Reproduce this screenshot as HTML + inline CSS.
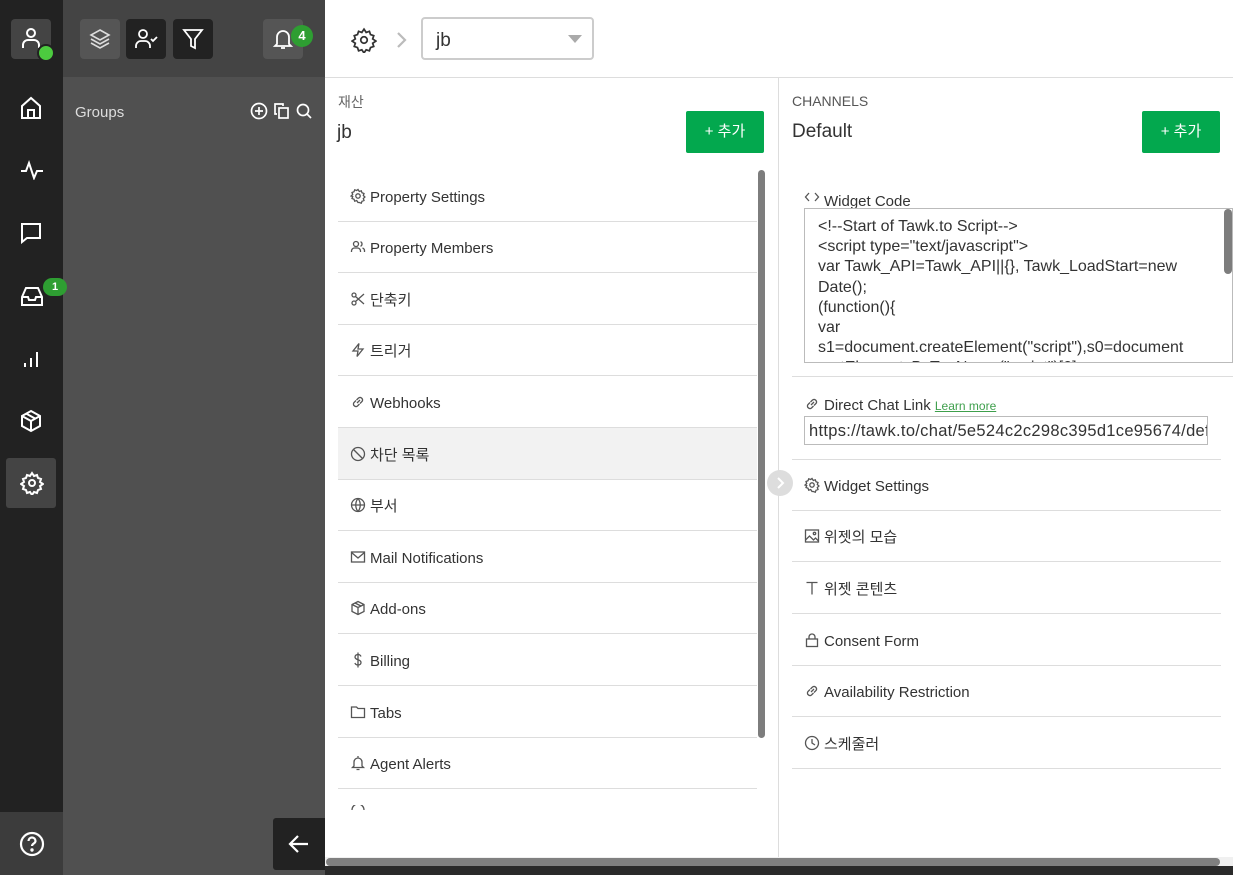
<!DOCTYPE html>
<html><head><meta charset="utf-8"><style>
*{box-sizing:border-box;margin:0;padding:0}
body{width:1233px;height:875px;overflow:hidden;position:relative;background:#fff;font-family:"Liberation Sans","Noto Sans CJK KR",sans-serif;color:#333}
.a{position:absolute}
.nav svg{position:absolute;left:20px}
.row{position:absolute;left:338px;width:419px;height:52px;border-bottom:1px solid #ddd;font-size:15px;line-height:56px;padding-left:12px;color:#333}
.rrow{position:absolute;left:792px;width:429px;height:52px;border-bottom:1px solid #ddd;font-size:15px;line-height:56px;padding-left:12px;color:#333}
.ic{display:inline-block;width:16px;height:16px;vertical-align:-2px;margin-right:4px;fill:none;stroke:#555;stroke-width:1.3}
.btn{position:absolute;background:#03a84e;color:#fff;font-size:15px;text-align:center;border-radius:2px;line-height:40px}
</style></head><body>
<div class="a" style="left:0;top:0;width:63px;height:875px;background:#222"></div>
<div class="a" style="left:0;top:812px;width:63px;height:63px;background:#3c3c3c"></div>
<div class="a" style="left:63px;top:0;width:262px;height:77px;background:#444"></div>
<div class="a" style="left:63px;top:77px;width:262px;height:798px;background:#505050"></div>
<div class="a" style="left:325px;top:866px;width:908px;height:9px;background:#2a2a2a"></div>
<div class="nav">
<div class="a" style="left:11px;top:19px;width:40px;height:40px;background:#444;border-radius:4px"></div>
<svg class="a" style="left:21px;top:27px" width="20" height="22" viewBox="0 0 20 22" fill="none" stroke="#fff" stroke-width="2"><circle cx="10" cy="6" r="4"/><path d="M2 21v-3a5 5 0 015-5h6a5 5 0 015 5v3"/></svg>
<div class="a" style="left:37px;top:44px;width:18px;height:18px;border-radius:50%;background:#4ccb3f;border:2px solid #222"></div>
<svg style="top:96px" width="22" height="24" viewBox="0 0 22 24" fill="none" stroke="#fff" stroke-width="2"><path d="M2 10L11 2l9 8v12H2z"/><path d="M8 22v-8h6v8"/></svg>
<svg style="top:160px" width="24" height="20" viewBox="0 0 24 20" fill="none" stroke="#fff" stroke-width="2"><path d="M1 11h5l3-8 5 15 3-7h6"/></svg>
<svg style="top:222px" width="22" height="22" viewBox="0 0 22 22" fill="none" stroke="#fff" stroke-width="2"><path d="M2 2h18v14H7l-5 4z"/></svg>
<svg style="top:285px" width="24" height="22" viewBox="0 0 24 22" fill="none" stroke="#fff" stroke-width="2"><path d="M2 12l4-9h12l4 9v8H2z"/><path d="M2 12h6l1 3h6l1-3h6"/></svg>
<div class="a" style="left:43px;top:278px;width:24px;height:18px;border-radius:9px;background:#2e9e32;color:#fff;font-size:11px;font-weight:bold;text-align:center;line-height:18px">1</div>
<svg style="top:348px" width="22" height="22" viewBox="0 0 22 22" fill="none" stroke="#fff" stroke-width="2"><path d="M5 19v-4M11 19v-9M17 19V4"/></svg>
<svg style="top:409px" width="22" height="24" viewBox="0 0 22 24" fill="none" stroke="#fff" stroke-width="2"><path d="M11 2l9 5v10l-9 5-9-5V7z"/><path d="M2 7l9 5 9-5M11 12v10M6 4.5l9 5"/></svg>
<div class="a" style="left:6px;top:458px;width:50px;height:50px;background:#444;border-radius:3px"></div>
<svg style="top:471px" width="24" height="24" viewBox="0 0 24 24" fill="none" stroke="#fff" stroke-width="2"><circle cx="12" cy="12" r="3"/><path d="M12 2l2 3 3-1 1 3 3 1-1 3 3 2-3 2 1 3-3 1-1 3-3-1-2 3-2-3-3 1-1-3-3-1 1-3-3-2 3-2-1-3 3-1 1-3 3 1z"/></svg>
<svg style="top:831px;left:19px" width="26" height="26" viewBox="0 0 26 26" fill="none" stroke="#fff" stroke-width="2.2"><circle cx="13" cy="13" r="11"/><path d="M9.5 10a3.5 3.5 0 117 0c0 2.5-3.5 2.5-3.5 5"/><circle cx="13" cy="19" r=".6" fill="#fff"/></svg>
</div>
<div class="a" style="left:80px;top:19px;width:40px;height:40px;background:#555;border-radius:4px"></div>
<svg class="a" style="left:89px;top:28px" width="22" height="22" viewBox="0 0 22 22" fill="none" stroke="#ddd" stroke-width="1.6"><path d="M11 2l9 5-9 5-9-5z"/><path d="M2 11l9 5 9-5M2 15l9 5 9-5"/></svg>
<div class="a" style="left:126px;top:19px;width:40px;height:40px;background:#222;border-radius:4px"></div>
<svg class="a" style="left:134px;top:28px" width="26" height="22" viewBox="0 0 26 22" fill="none" stroke="#fff" stroke-width="1.8"><circle cx="9" cy="6" r="4"/><path d="M2 20v-2a5 5 0 015-5h4a5 5 0 015 5v2"/><path d="M17 11l2 2 4-4"/></svg>
<div class="a" style="left:173px;top:19px;width:40px;height:40px;background:#222;border-radius:4px"></div>
<svg class="a" style="left:182px;top:28px" width="22" height="22" viewBox="0 0 22 22" fill="none" stroke="#fff" stroke-width="1.8"><path d="M2 2h18l-7 9v9l-4-2v-7z"/></svg>
<div class="a" style="left:263px;top:19px;width:40px;height:40px;background:#555;border-radius:4px"></div>
<svg class="a" style="left:272px;top:28px" width="22" height="22" viewBox="0 0 22 22" fill="none" stroke="#fff" stroke-width="1.8"><path d="M5 16V9a6 6 0 0112 0v7l2 2H3z"/><path d="M9 20h4"/></svg>
<div class="a" style="left:291px;top:25px;width:22px;height:22px;border-radius:50%;background:#2e9e32;color:#fff;font-size:13px;font-weight:bold;text-align:center;line-height:22px">4</div>
<div class="a" style="left:75px;top:104px;color:#ddd;font-size:15px">Groups</div>
<svg class="a" style="left:250px;top:102px" width="66" height="18" viewBox="0 0 66 18" fill="none" stroke="#fff" stroke-width="1.7"><circle cx="9" cy="9" r="7.5"/><path d="M9 5v8M5 9h8"/><path d="M27 12h-2V2h8v2"/><rect x="29" y="6" width="9" height="10"/><circle cx="53" cy="8" r="5.5"/><path d="M57 12l4 4"/></svg>
<div class="a" style="left:273px;top:818px;width:52px;height:52px;background:#222;border-radius:3px 0 0 3px"></div>
<svg class="a" style="left:288px;top:834px" width="22" height="20" viewBox="0 0 22 20" fill="none" stroke="#fff" stroke-width="2.2"><path d="M20 10H3M10 2L2 10l8 8"/></svg>
<div class="a" style="left:325px;top:77px;width:908px;height:1px;background:#ddd"></div>
<svg class="a" style="left:351px;top:27px" width="26" height="26" viewBox="0 0 24 24" fill="none" stroke="#333" stroke-width="1.6"><circle cx="12" cy="12" r="3"/><path d="M12 2l2 3 3-1 1 3 3 1-1 3 3 2-3 2 1 3-3 1-1 3-3-1-2 3-2-3-3 1-1-3-3-1 1-3-3-2 3-2-1-3 3-1 1-3 3 1z"/></svg>
<svg class="a" style="left:396px;top:31px" width="12" height="18" viewBox="0 0 12 18" fill="none" stroke="#bbb" stroke-width="2.2"><path d="M2 2l7 7-7 7"/></svg>
<div class="a" style="left:421px;top:17px;width:173px;height:43px;border:2px solid #ccc;border-radius:4px;font-size:19px;line-height:44px;padding-left:13px;color:#333">jb</div>
<div class="a" style="left:568px;top:35px;width:0;height:0;border-left:7px solid transparent;border-right:7px solid transparent;border-top:8px solid #aaa"></div>
<div class="a" style="left:338px;top:92px;font-size:14px;color:#666">재산</div>
<div class="a" style="left:337px;top:122px;font-size:19px;color:#333">jb</div>
<div class="btn" style="left:686px;top:111px;width:78px;line-height:42px">+ 추가</div>
<div class="a" style="left:338px;top:428px;width:419px;height:51px;background:#f2f2f2"></div>
<svg width="0" height="0" style="position:absolute"><defs>
<g id="gear"><circle cx="8" cy="8" r="2.2"/><path d="M8 1.5l1.3 2 2-.7.7 2 2 .7-.7 2 1.6 1.5-1.6 1.5.7 2-2 .7-.7 2-2-.7L8 14.5l-1.3-2-2 .7-.7-2-2-.7.7-2L1.1 8l1.6-1.5-.7-2 2-.7.7-2 2 .7z"/></g>
<g id="link"><path d="M7 9l3-3M6 6.5L4 8.5a2.5 2.5 0 003.5 3.5l2-2M10 9.5l2-2A2.5 2.5 0 008.5 4l-2 2"/></g>
</defs></svg>
<div class="row" style="top:170px"><svg class="ic" viewBox="0 0 16 16"><use href="#gear"/></svg>Property Settings</div>
<div class="row" style="top:221px"><svg class="ic" viewBox="0 0 16 16"><circle cx="6" cy="5" r="2.5"/><path d="M1.5 13v-1a3 3 0 013-3h3a3 3 0 013 3v1M10.5 2.7a2.5 2.5 0 010 4.6M12.5 9a3 3 0 012 3v1"/></svg>Property Members</div>
<div class="row" style="top:273px"><svg class="ic" viewBox="0 0 16 16"><circle cx="4" cy="4" r="2"/><circle cx="4" cy="12" r="2"/><path d="M5.5 5.5L14 13M5.5 10.5L14 3"/></svg>단축키</div>
<div class="row" style="top:324px"><svg class="ic" viewBox="0 0 16 16"><path d="M9 1.5L3 9h5l-1 5.5L13 7H8z"/></svg>트리거</div>
<div class="row" style="top:376px"><svg class="ic" viewBox="0 0 16 16"><use href="#link"/></svg>Webhooks</div>
<div class="row" style="top:428px"><svg class="ic" viewBox="0 0 16 16"><circle cx="8" cy="8" r="6.5"/><path d="M3.5 3.5l9 9"/></svg>차단 목록</div>
<div class="row" style="top:479px"><svg class="ic" viewBox="0 0 16 16"><circle cx="8" cy="8" r="6.5"/><path d="M1.5 8h13M8 1.5c-3 3.5-3 9.5 0 13M8 1.5c3 3.5 3 9.5 0 13"/></svg>부서</div>
<div class="row" style="top:531px"><svg class="ic" viewBox="0 0 16 16"><rect x="1.5" y="3" width="13" height="10"/><path d="M1.5 3.5L8 9l6.5-5.5"/></svg>Mail Notifications</div>
<div class="row" style="top:582px"><svg class="ic" viewBox="0 0 16 16"><path d="M8 1.5l6 3v7l-6 3-6-3v-7z"/><path d="M2 4.5l6 3 6-3M8 7.5v7M5 3l6 3"/></svg>Add-ons</div>
<div class="row" style="top:634px"><svg class="ic" viewBox="0 0 16 16"><path d="M11 4.5c-.5-1.2-1.7-2-3-2-1.7 0-3 1-3 2.5s1.3 2.2 3 2.7 3 1.2 3 2.8-1.3 2.5-3 2.5c-1.4 0-2.6-.8-3.1-2M8 0.5v15"/></svg>Billing</div>
<div class="row" style="top:686px"><svg class="ic" viewBox="0 0 16 16"><path d="M1.5 3h5l1.5 1.5h6.5v9h-13z"/></svg>Tabs</div>
<div class="row" style="top:737px"><svg class="ic" viewBox="0 0 16 16"><path d="M4 11V7a4 4 0 018 0v4l1.5 1.5h-11zM6.5 14.5h3M8 1v2"/></svg>Agent Alerts</div>
<svg class="a" style="left:350px;top:805px" width="16" height="5" viewBox="0 0 16 5" fill="none" stroke="#555" stroke-width="1.3"><path d="M2 5a6 6 0 0112 0"/></svg>
<div class="a" style="left:758px;top:170px;width:7px;height:568px;background:#7d7d7d;border-radius:4px"></div>
<div class="a" style="left:778px;top:77px;width:1px;height:789px;background:#ddd"></div>
<div class="a" style="left:767px;top:470px;width:26px;height:26px;border-radius:50%;background:#ddd"></div>
<svg class="a" style="left:776px;top:476px" width="10" height="14" viewBox="0 0 10 14" fill="none" stroke="#fff" stroke-width="2"><path d="M2 2l5 5-5 5"/></svg>
<div class="a" style="left:792px;top:93px;font-size:14px;color:#555">CHANNELS</div>
<div class="a" style="left:792px;top:121px;font-size:19px;color:#333">Default</div>
<div class="btn" style="left:1142px;top:111px;width:78px;line-height:42px">+ 추가</div>
<div class="a" style="left:804px;top:189px;font-size:15px"><svg class="ic" viewBox="0 0 16 16" style="vertical-align:1px"><path d="M5 4L1.5 8 5 12M11 4l3.5 4L11 12"/></svg>Widget Code</div>
<div class="a" style="left:804px;top:208px;width:429px;height:155px;border:1px solid #bbb;overflow:hidden;padding:8px 0 0 13px;font-size:16px;line-height:20.2px;color:#333">&lt;!--Start of Tawk.to Script--&gt;<br>&lt;script type="text/javascript"&gt;<br>var Tawk_API=Tawk_API||{}, Tawk_LoadStart=new<br>Date();<br>(function(){<br>var<br>s1=document.createElement("script"),s0=document<br>.getElementsByTagName("script")[0];</div>
<div class="a" style="left:1224px;top:209px;width:8px;height:65px;background:#7d7d7d;border-radius:4px"></div>
<div class="a" style="left:792px;top:376px;width:441px;height:1px;background:#ddd"></div>
<div class="a" style="left:804px;top:396px;font-size:15px"><svg class="ic" viewBox="0 0 16 16"><use href="#link"/></svg>Direct Chat Link <span style="font-size:12px;color:#3e9f4c;text-decoration:underline">Learn more</span></div>
<div class="a" style="left:804px;top:416px;width:404px;height:29px;border:1px solid #bbb;font-size:16.5px;line-height:29px;padding-left:4px;overflow:hidden;white-space:nowrap;letter-spacing:.3px">https://tawk.to/chat/5e524c2c298c395d1ce95674/default</div>
<div class="a" style="left:792px;top:459px;width:429px;height:1px;background:#ddd"></div>
<div class="rrow" style="top:459px"><svg class="ic" viewBox="0 0 16 16"><use href="#gear"/></svg>Widget Settings</div>
<div class="rrow" style="top:510px"><svg class="ic" viewBox="0 0 16 16"><rect x="1.5" y="2" width="13" height="12"/><circle cx="10.5" cy="5.5" r="1.2"/><path d="M1.5 12l4-4 4 4 2-2 3 3"/></svg>위젯의 모습</div>
<div class="rrow" style="top:562px"><svg class="ic" viewBox="0 0 16 16"><path d="M2.5 2.5h11M8 2.5v12"/></svg>위젯 콘텐츠</div>
<div class="rrow" style="top:614px"><svg class="ic" viewBox="0 0 16 16"><rect x="2.5" y="7" width="11" height="7.5"/><path d="M5 7V5a3 3 0 016 0v2"/></svg>Consent Form</div>
<div class="rrow" style="top:665px"><svg class="ic" viewBox="0 0 16 16"><use href="#link"/></svg>Availability Restriction</div>
<div class="rrow" style="top:717px"><svg class="ic" viewBox="0 0 16 16"><circle cx="8" cy="8" r="6.5"/><path d="M8 4v4l3 2"/></svg>스케줄러</div>
<div class="a" style="left:325px;top:857px;width:908px;height:9px;background:#f0f0f0"></div>
<div class="a" style="left:326px;top:858px;width:894px;height:8px;background:#808080;border-radius:4px"></div>
</body></html>
